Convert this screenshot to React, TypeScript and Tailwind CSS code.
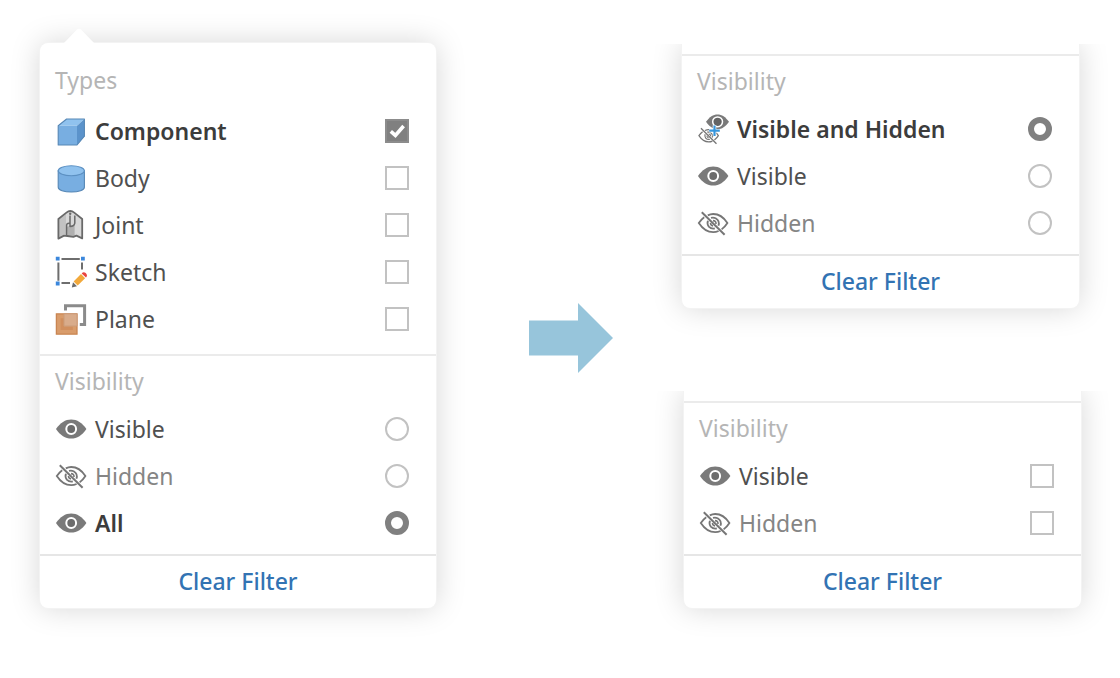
import type { ReactNode } from "react";

const iconClass = "h-8 w-8 shrink-0";

function ComponentIcon() {
  return (
    <svg viewBox="0 0 32 32" className={iconClass} aria-hidden="true">
      <path d="M3.2 10.8 11.6 4H29.4L22 10.8Z" fill="#90c2ee" />
      <path d="M22 10.8 29.4 4V21.2L22 30Z" fill="#5b93cb" />
      <path d="M3.2 10.8H22V30H3.2Z" fill="#78aee1" />
      <path d="M3.2 10.8 11.6 4H29.4V21.2L22 30H3.2Z" fill="none" stroke="#5687b5" strokeWidth="1.1" strokeLinejoin="round" />
    </svg>
  );
}

function BodyIcon() {
  return (
    <svg viewBox="0 0 32 32" className={iconClass} aria-hidden="true">
      <path d="M3.2 8.7V25.2C3.2 28 9 30 16.3 30S29.4 28 29.4 25.2V8.7Z" fill="#78aee1" stroke="#5687b5" strokeWidth="1.1" />
      <ellipse cx="16.3" cy="8.7" rx="13.1" ry="5" fill="#90c2ee" stroke="#5c90c2" strokeWidth="1.1" />
    </svg>
  );
}

function JointIcon() {
  return (
    <svg viewBox="0 0 32 32" className={iconClass} aria-hidden="true" strokeLinejoin="round">
      <path d="M3.4 10 11.4 3.6Q15.3.4 19.2 3.6L27.2 10V29.4L21.4 26.6 18.4 27.8 12.4 27 9 26.6 3.4 29.6Z" fill="#d8d8d8" />
      <path d="M4 10.4 11 5V25.6L8.6 25.5 4 28Z" fill="#c2c2c2" />
      <path d="M12 17.8 19.6 15.6V27L12.4 26.6Z" fill="#b0b0b0" />
      <path d="M3.4 10 11.4 3.6Q15.3.4 19.2 3.6L27.2 10V29.4L21.4 26.6 18.4 27.8 12.4 27 9 26.6 3.4 29.6Z" fill="none" stroke="#696969" strokeWidth="1.8" />
      <path d="M11.6 26V15.8Q12 13.8 14.8 14.2M19.8 6.4V14.2Q19.2 17.6 15 17.6V6.6" fill="none" stroke="#696969" strokeWidth="1.5" />
      <circle cx="15.2" cy="4.8" r="1.2" fill="#696969" />
    </svg>
  );
}

function SketchIcon() {
  return (
    <svg viewBox="0 0 32 32" className={iconClass} aria-hidden="true">
      <path d="M6.5 3H24.8M3.4 6.4V24.8M27 6.4V13.6M6.5 27H15" fill="none" stroke="#6e6e6e" strokeWidth="2" />
      <path d="M.8 .8H4.6V4.6H.8ZM26 .8H29.8V4.6H26ZM.8 25.6H4.6V29.4H.8Z" fill="#3b87dc" />
      <path d="M16.8 31.4 18 26.2 22 30.2Z" fill="#6b6b6b" />
      <path d="M18.6 25.5 26 18.1 30.1 22.2 22.7 29.6Z" fill="#f2a93b" />
      <path d="M26.7 17.5Q28.4 15.2 30.7 17 33 19.3 31 21.5Z" fill="#e9443f" />
    </svg>
  );
}

function PlaneIcon() {
  return (
    <svg viewBox="0 0 32 32" className={iconClass} aria-hidden="true">
      <path d="M10.5 7.6V2.8H29.6V21.6H24.8" fill="none" stroke="#8b8b8b" strokeWidth="3" />
      <path d="M1.4 10.8H22V31.2H1.4Z" fill="#d99c6b" stroke="#c98552" strokeWidth="1.3" />
      <path d="M5.6 15.2H9V23.6H17.8V27H5.6Z" fill="#d18f5e" />
      <path d="M9 10.8H22V23H9Z" fill="#d9ac8b" stroke="#cb9c7b" strokeWidth="1" />
    </svg>
  );
}

function EyeIcon() {
  return (
    <svg viewBox="0 0 32 32" className={iconClass} aria-hidden="true">
      <path d="M1 16C5.2 9.6 10.4 6.4 16.2 6.4S27.2 9.6 31.4 16C27.2 22.4 22 25.6 16.2 25.6S5.2 22.4 1 16Z" fill="#7a7a7a" />
      <circle cx="16.2" cy="16" r="4.9" fill="#6c6c6c" stroke="#fff" strokeWidth="2" />
    </svg>
  );
}

function HiddenEyeShape() {
  return (
    <g fill="none" stroke="#767676" strokeWidth="1.8">
      <path d="M10.8 8.4Q13.4 7 16.2 7 24.6 7 30.4 16 28.2 19.6 24.6 22.4" />
      <path d="M7.2 10.2Q4.2 12.4 1.8 16 7.8 25.2 16.2 25.2 19 25.2 21.6 24" />
      <path d="M14 10.9Q16.4 10.2 18.6 11.2 23.2 14 21.4 18.8M17.8 21.4Q14.4 22.2 11.8 19.6 9.8 17 10.9 13.8" />
      <path d="M16 13.6Q19.2 13.8 19 17M13.5 16Q13.6 18.6 16 18.9" strokeWidth="1.6" />
      <path d="M4.8 5.2 27.6 27.8" strokeWidth="2" />
    </g>
  );
}

function HiddenIcon() {
  return (
    <svg viewBox="0 0 32 32" className={iconClass} aria-hidden="true">
      <HiddenEyeShape />
    </svg>
  );
}

function VisibleAndHiddenIcon() {
  return (
    <svg viewBox="0 0 32 32" className={iconClass} aria-hidden="true">
      <g transform="translate(.7 11.8) scale(.68)">
        <HiddenEyeShape />
      </g>
      <path d="M9 8.8C12.4 3.8 16.2 1.4 20.5 1.4S28.6 3.8 32 8.8C28.6 13.8 24.8 16.2 20.5 16.2S12.4 13.8 9 8.8Z" fill="#7a7a7a" />
      <circle cx="20.6" cy="8.8" r="4.9" fill="#636363" stroke="#fff" strokeWidth="1.5" />
      <path d="M17.5 12.2V23.2M12 17.7H23" stroke="#fff" strokeWidth="3.6" />
      <path d="M17.5 12.4V23M12.2 17.7H22.8" stroke="#3595dc" strokeWidth="2.2" />
    </svg>
  );
}

function Option({
  icon,
  label,
  type,
  name,
  muted = false,
  checked = false,
}: {
  icon: ReactNode;
  label: string;
  type: "checkbox" | "radio";
  name: string;
  muted?: boolean;
  checked?: boolean;
}) {
  const shape =
    type === "radio"
      ? "rounded-full checked:border-6 checked:border-[#808080]"
      : "checked:border-[#8c8c8c] checked:bg-[#808080]";
  return (
    <label
      className={`flex h-[47px] cursor-pointer items-center gap-2 has-checked:font-semibold has-checked:text-[#3c3c3c] ${
        muted ? "text-[#858585]" : "text-[#505050]"
      }`}
    >
      {icon}
      <span className="grow whitespace-nowrap">{label}</span>
      <span className="grid shrink-0 place-items-center">
        <input
          type={type}
          name={name}
          defaultChecked={checked}
          className={`peer col-start-1 row-start-1 h-6 w-6 cursor-pointer appearance-none border-2 border-[#c2c2c2] bg-white ${shape}`}
        />
        {type === "checkbox" && (
          <svg viewBox="0 0 24 24" className="pointer-events-none invisible col-start-1 row-start-1 h-6 w-6 peer-checked:visible" aria-hidden="true">
            <path d="M5.8 12.4 10.4 16.4 18.6 7" fill="none" stroke="#fff" strokeWidth="3.6" />
          </svg>
        )}
      </span>
    </label>
  );
}

function Section({ title, className, children }: { title: string; className: string; children: ReactNode }) {
  return (
    <fieldset className={`flow-root pr-[27px] pl-[15px] ${className}`}>
      <legend className="float-left flex h-[49px] w-full items-center text-[#b5b5b5]">{title}</legend>
      <div className="clear-both">{children}</div>
    </fieldset>
  );
}

function ClearFilter() {
  return (
    <button type="button" className="h-[54px] w-full cursor-pointer border-t-2 border-[#e6e6e6] pb-0.5 text-center font-medium text-[#3273b3]">
      Clear Filter
    </button>
  );
}

const panelShadow = "shadow-[0_0_0_1px_#f3f3f3,0_0_30px_rgba(0,0,0,0.17)]";
const cutPanel = `rounded-b-lg bg-white pt-[10px] [clip-path:inset(0_-40px_-40px_-40px)] ${panelShadow}`;
const divided = "border-t-2 border-[#ebebeb] pb-2";

export default function App() {
  return (
    <main className="grid grid-cols-[396fr_246fr_399fr] bg-white pt-[43px] pr-[39px] pb-[70px] pl-10 font-['Noto_Sans',sans-serif] text-[23px] leading-7">
      <form className={`relative rounded-lg bg-white ${panelShadow}`}>
        <svg viewBox="0 0 32 16" className="absolute -top-[15px] left-[23px] h-4 w-8" aria-hidden="true">
          <path d="M0 16 14 1.6Q16 0 18 1.6L32 16Z" fill="#fff" />
        </svg>
        <Section title="Types" className="pt-3 pb-3">
          <div className="pt-[3px]">
            <Option icon={<ComponentIcon />} label="Component" type="checkbox" name="type" checked />
            <Option icon={<BodyIcon />} label="Body" type="checkbox" name="type" />
            <Option icon={<JointIcon />} label="Joint" type="checkbox" name="type" />
            <Option icon={<SketchIcon />} label="Sketch" type="checkbox" name="type" />
            <Option icon={<PlaneIcon />} label="Plane" type="checkbox" name="type" />
          </div>
        </Section>
        <Section title="Visibility" className={divided}>
          <Option icon={<EyeIcon />} label="Visible" type="radio" name="visibility" />
          <Option icon={<HiddenIcon />} label="Hidden" type="radio" name="visibility" muted />
          <Option icon={<EyeIcon />} label="All" type="radio" name="visibility" checked />
        </Section>
        <ClearFilter />
      </form>

      <div className="flex items-center justify-center pt-6 pl-6">
        <svg viewBox="0 0 86 70" className="h-[70px] w-[86px]" aria-hidden="true">
          <path d="M1 17.5H50V0L85 35 50 70V52.5H1Z" fill="#97c5db" />
        </svg>
      </div>

      <div className="flex flex-col justify-between pt-px">
        <form className={`mr-0.5 ${cutPanel}`}>
          <Section title="Visibility" className={divided}>
            <Option icon={<VisibleAndHiddenIcon />} label="Visible and Hidden" type="radio" name="visibility" checked />
            <Option icon={<EyeIcon />} label="Visible" type="radio" name="visibility" />
            <Option icon={<HiddenIcon />} label="Hidden" type="radio" name="visibility" muted />
          </Section>
          <ClearFilter />
        </form>
        <form className={`ml-0.5 ${cutPanel}`}>
          <Section title="Visibility" className={divided}>
            <Option icon={<EyeIcon />} label="Visible" type="checkbox" name="visible" />
            <Option icon={<HiddenIcon />} label="Hidden" type="checkbox" name="hidden" muted />
          </Section>
          <ClearFilter />
        </form>
      </div>
    </main>
  );
}
